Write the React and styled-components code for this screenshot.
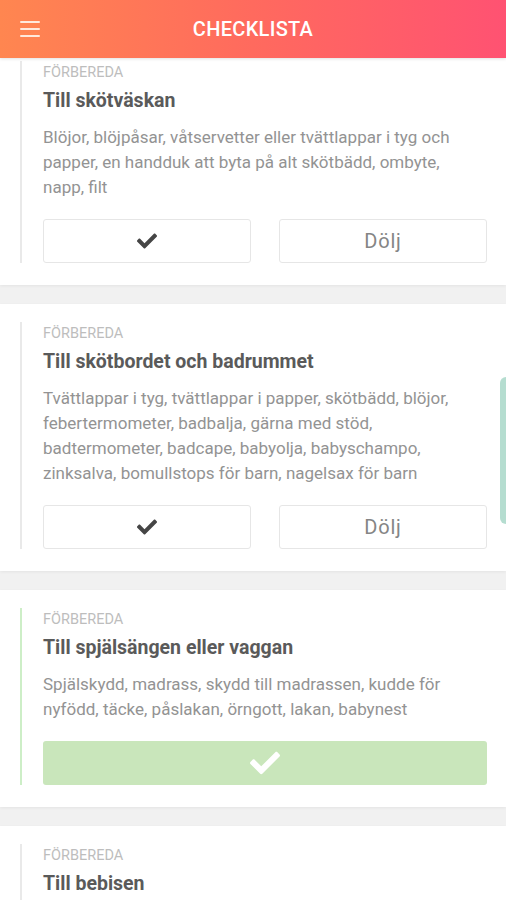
import React from "react";
import styled, { createGlobalStyle } from "styled-components";
import { FaCheck } from "react-icons/fa";

const GlobalStyle = createGlobalStyle`
  html, body {
    margin: 0;
    padding: 0;
    background: #f1f1f1;
    font-family: Roboto, "Noto Sans", "Liberation Sans", sans-serif;
  }
`;

const Page = styled.div`
  position: relative;
  width: 506px;
  height: 900px;
  overflow: hidden;
  display: flex;
  flex-direction: column;
  background: #f1f1f1;
`;

const Header = styled.header`
  position: relative;
  z-index: 2;
  flex: 0 0 58px;
  display: flex;
  align-items: center;
  justify-content: center;
  background: linear-gradient(to right, #ff8650, #ff6a5e 50%, #ff5272);
  box-shadow: 0 1px 3px rgba(0, 0, 0, 0.12);
`;

const MenuButton = styled.button`
  position: absolute;
  left: 20px;
  top: 21px;
  width: 20px;
  height: 16px;
  padding: 0;
  border: 0;
  background: transparent;
  display: flex;
  flex-direction: column;
  justify-content: space-between;

  span {
    display: block;
    height: 2px;
    background: #ffe9dc;
    border-radius: 1px;
  }
`;

const Title = styled.h1`
  margin: 0;
  color: #ffffff;
  font-size: 20px;
  font-weight: 500;
  letter-spacing: 0.3px;
`;

const List = styled.main`
  display: flex;
  flex-direction: column;
  gap: 19px;
  margin-top: -15px;
`;

const Card = styled.section`
  background: #ffffff;
  padding: 18px 19px 22px 20px;
  box-shadow: 0 1px 3px rgba(0, 0, 0, 0.06);
`;

const Block = styled.div`
  border-left: 2px solid ${(p) => (p.$done ? "#cdeec7" : "#e9e9e9")};
  padding-left: 21px;
`;

const Label = styled.div`
  font-size: 14.5px;
  line-height: 24px;
  color: #bdbdbd;
  text-transform: uppercase;
`;

const CardTitle = styled.h2`
  margin: 0;
  font-size: 19.5px;
  line-height: 32px;
  font-weight: 700;
  color: #5a5a5a;
`;

const Description = styled.p`
  margin: 8px 0 0;
  max-width: 415px;
  font-size: 17px;
  line-height: 25px;
  color: #939393;
`;

const Actions = styled.div`
  display: grid;
  grid-template-columns: 1fr 1fr;
  gap: 28px;
  margin-top: 19px;
`;

const ActionButton = styled.button`
  height: 44px;
  border: 1px solid #e6e6e6;
  border-radius: 3px;
  background: #ffffff;
  display: flex;
  align-items: center;
  justify-content: center;
  font-family: inherit;
  font-size: 20px;
  color: #858585;
  letter-spacing: 0.8px;
`;

const DoneButton = styled.button`
  width: 100%;
  height: 44px;
  margin-top: 19px;
  border: 0;
  border-radius: 3px;
  background: #c9e6bb;
  display: flex;
  align-items: center;
  justify-content: center;
  color: #ffffff;
`;

const ScrollTab = styled.div`
  position: absolute;
  right: 0;
  top: 377px;
  width: 6px;
  height: 147px;
  background: #b5ddd0;
  border-radius: 6px 0 0 6px;
`;

const items = [
  {
    title: "Till skötväskan",
    text: "Blöjor, blöjpåsar, våtservetter eller tvättlappar i tyg och papper, en handduk att byta på alt skötbädd, ombyte, napp, filt",
  },
  {
    title: "Till skötbordet och badrummet",
    text: "Tvättlappar i tyg, tvättlappar i papper, skötbädd, blöjor, febertermometer, badbalja, gärna med stöd, badtermometer, badcape, babyolja, babyschampo, zinksalva, bomullstops för barn, nagelsax för barn",
  },
  {
    title: "Till spjälsängen eller vaggan",
    text: "Spjälskydd, madrass, skydd till madrassen, kudde för nyfödd, täcke, påslakan, örngott, lakan, babynest",
    done: true,
  },
  {
    title: "Till bebisen",
    text: "Body, sparkdräkt, mössa, strumpor, vantar, overall, filt",
  },
];

const App = () => {
  return (
    <Page>
      <GlobalStyle />
      <Header>
        <MenuButton aria-label="Meny">
          <span />
          <span />
          <span />
        </MenuButton>
        <Title>CHECKLISTA</Title>
      </Header>

      <List>
        {items.map((item) => (
          <Card key={item.title}>
            <Block $done={item.done}>
              <Label>Förbereda</Label>
              <CardTitle>{item.title}</CardTitle>
              <Description>{item.text}</Description>
              {item.done ? (
                <DoneButton>
                  <FaCheck size={30} />
                </DoneButton>
              ) : (
                <Actions>
                  <ActionButton>
                    <FaCheck size={20} color="#454545" />
                  </ActionButton>
                  <ActionButton>Dölj</ActionButton>
                </Actions>
              )}
            </Block>
          </Card>
        ))}
      </List>

      <ScrollTab />
    </Page>
  );
};

export default App;
